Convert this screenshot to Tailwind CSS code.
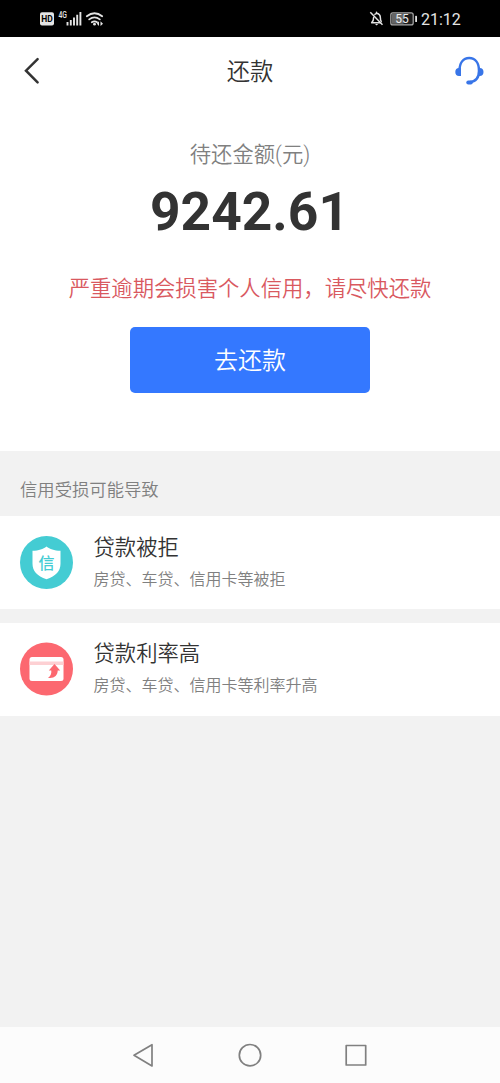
<!DOCTYPE html>
<html lang="zh-CN">
<head>
<meta charset="utf-8">
<meta name="viewport" content="width=device-width, initial-scale=1">
<title>还款</title>
<script src="https://cdn.jsdelivr.net/npm/@tailwindcss/browser@4"></script>
</head>
<body class="flex h-[1083px] w-[500px] flex-col overflow-hidden bg-[#f2f2f2] font-['Roboto','Noto_Sans_CJK_SC',sans-serif] text-[#333]">
  <div class="flex h-[37px] shrink-0 items-center justify-between bg-black pr-[39px] pl-[39px] text-[#e4e4e4]">
    <svg class="h-[37px] w-[68px]" viewBox="39 0 68 37" fill="none">
      <rect x="40" y="12.3" width="14" height="13.2" rx="2" fill="#e4e4e4"/>
      <text x="47" y="22.4" text-anchor="middle" font-size="9.5" font-weight="700" fill="#000" textLength="11.5" lengthAdjust="spacingAndGlyphs">HD</text>
      <text x="58.5" y="17.5" font-size="8.5" font-weight="500" fill="#e4e4e4" textLength="8.5" lengthAdjust="spacingAndGlyphs">4G</text>
      <path d="M67.5 22v3.5M70.8 20v5.5M74 17.4v8.1M77.2 14.7v10.8M80.4 12v13.5" stroke="#e4e4e4" stroke-width="1.9"/>
      <path d="M86.8 16.2q7.700-6 15.400 0M89.2 19.4q5.3-4 10.6 0M91.8 22.2q2.7-1.8 5.3 0" stroke="#e4e4e4" stroke-width="1.8" stroke-linecap="round"/>
      <circle cx="94.5" cy="24.2" r="1.4" fill="#e4e4e4"/>
      <path d="M99 21.3l-2.2 2.4 2.2 2.2zM100.5 21.3l2.5 2.4-2.5 2.2z" fill="#e4e4e4"/>
    </svg>
    <div class="flex items-center">
      <svg class="h-[37px] w-[52px]" viewBox="369 0 52 37" fill="none">
        <path d="M372.3 22.7h8.2M371.7 22.7c1.7-1.3 1.9-2.9 1.9-5.1M374.9 14.4c.5-.7 1.1-.9 1.6-1v-1.2M376.5 13.3c3.1.4 3.9 2.6 3.9 4.8 0 1.3.2 2.5.8 3.3" stroke="#e4e4e4" stroke-width="1.5" stroke-linecap="round"/>
        <path d="M370.3 12.2l12.2 12.5" stroke="#e4e4e4" stroke-width="1.5"/>
        <path d="M375 24h3.2l-1.6 1.6z" fill="#e4e4e4"/>
        <rect x="390.8" y="12.9" width="22.4" height="12" rx="2" fill="#1c1c1c" stroke="#aaa" stroke-width="1.2"/>
        <rect x="392" y="14" width="11.5" height="9.8" fill="#666"/>
        <rect x="415.2" y="15.7" width="1.8" height="6.4" rx=".7" fill="#e4e4e4"/>
        <text x="402" y="23" text-anchor="middle" font-size="12" font-weight="400" fill="#eee">55</text>
      </svg>
      <span class="w-10 pt-px text-base leading-[37px] whitespace-nowrap">21:12</span>
    </div>
  </div>

  <header class="flex h-[67px] shrink-0 items-center justify-between bg-white pr-[16px] pl-[24px]">
    <svg class="h-[28px] w-[22px]" viewBox="24 57 22 28" fill="none"><path d="M37.6 59.2L26 70.7l11.6 11.6" stroke="#333" stroke-width="2.5" stroke-linecap="round"/></svg>
    <h1 class="mt-[2px] text-[23.3px] leading-8 font-[350]">还款</h1>
    <svg class="h-[30px] w-[30px]" viewBox="454 56 30 30" fill="none">
      <path d="M459.500 71c0-8 3.700-12.900 9.700-12.900S479 63 479 71c0 6.500-3.200 10.600-9.500 11.200" stroke="#3875e8" stroke-width="2.500"/>
      <path d="M461 68h-2c-2.300 0-3.700 1.600-3.700 4s1.400 4.100 3.700 4.100h2zM478 68h1.800c2.300 0 3.700 1.600 3.700 4s-1.400 4.100-3.700 4.100H478z" fill="#3875e8"/>
      <rect x="466.300" y="80.500" width="6.500" height="3.900" rx="1.950" fill="#3875e8"/>
    </svg>
  </header>

  <main class="flex h-[347px] shrink-0 flex-col items-center bg-white pt-[35px]">
    <p class="text-[21.33px] leading-8 font-[350] text-[#808080]">待还金额(元)</p>
    <p class="mt-[9px] -ml-px text-[53.3px] leading-[64px] font-bold">9242.61</p>
    <p class="mt-[29px] text-[21.33px] leading-8 font-[350] whitespace-nowrap text-[#d9595f]">严重逾期会损害个人信用，请尽快还款</p>
    <button class="mt-[22px] h-[66px] w-[240px] rounded-[5px] bg-[#3478ff] pt-[2px] text-2xl font-[350] text-white">去还款</button>
  </main>

  <section class="grow font-[350]">
    <h2 class="h-[65px] pt-[27px] pl-5 text-[17.33px] leading-6 font-[350] text-[#808080]">信用受损可能导致</h2>
    <div class="flex h-[93px] bg-white pt-[20px] pl-5">
      <svg class="h-[53px] w-[53px]" viewBox="0 0 53 53">
        <circle cx="26.500" cy="26.500" r="26.500" fill="#44ccd3"/>
        <path d="M26.500 10.500c3.500 2.700 7.500 4 14 4.300v13c0 7-4.500 12.500-14 15.500-9.500-3-14-8.500-14-15.500v-13c6.500-.3 10.500-1.600 14-4.300z" fill="#fff"/>
        <text x="26.500" y="32.500" text-anchor="middle" font-size="16" font-weight="500" fill="#44ccd3">信</text>
      </svg>
      <div class="-mt-[4px] ml-[20.5px]">
        <h3 class="text-[21.33px] leading-8 font-[350]">贷款被拒</h3>
        <p class="mt-[4px] text-base leading-6 text-[#808080]">房贷、车贷、信用卡等被拒</p>
      </div>
    </div>
    <div class="mt-[14px] flex h-[93px] bg-white pt-[19px] pl-5">
      <svg class="h-[54px] w-[53px]" viewBox="0 0 53 53">
        <circle cx="26.500" cy="26.500" r="26.500" fill="#fc6870"/>
        <rect x="9.500" y="14.500" width="34" height="24" rx="2.500" fill="#fff"/>
        <rect x="9.500" y="19" width="34" height="3.500" fill="#fdd0d3"/>
        <path d="M34.500 21.500l5.700 6.500h-2.500c.1 5-3.900 8.300-9.700 7.300 2.600-1.400 3.600-4 3.300-7.300h-2.500z" fill="#fc6870"/>
      </svg>
      <div class="-mt-[4px] ml-[20.5px]">
        <h3 class="text-[21.33px] leading-8 font-[350]">贷款利率高</h3>
        <p class="mt-[4px] text-base leading-6 text-[#808080]">房贷、车贷、信用卡等利率升高</p>
      </div>
    </div>
  </section>

  <nav class="flex h-[56px] shrink-0 items-center justify-center bg-[#fcfcfc]">
    <svg class="h-[56px] w-[240px]" viewBox="130 1027 240 56" fill="none" stroke="#808080" stroke-width="1.700" stroke-linejoin="round">
      <path d="M134 1055.300L152 1044.700v21.200z"/>
      <circle cx="250" cy="1055.200" r="10.700"/>
      <rect x="346.200" y="1045.500" width="19.500" height="19.500"/>
    </svg>
  </nav>
</body>
</html>
